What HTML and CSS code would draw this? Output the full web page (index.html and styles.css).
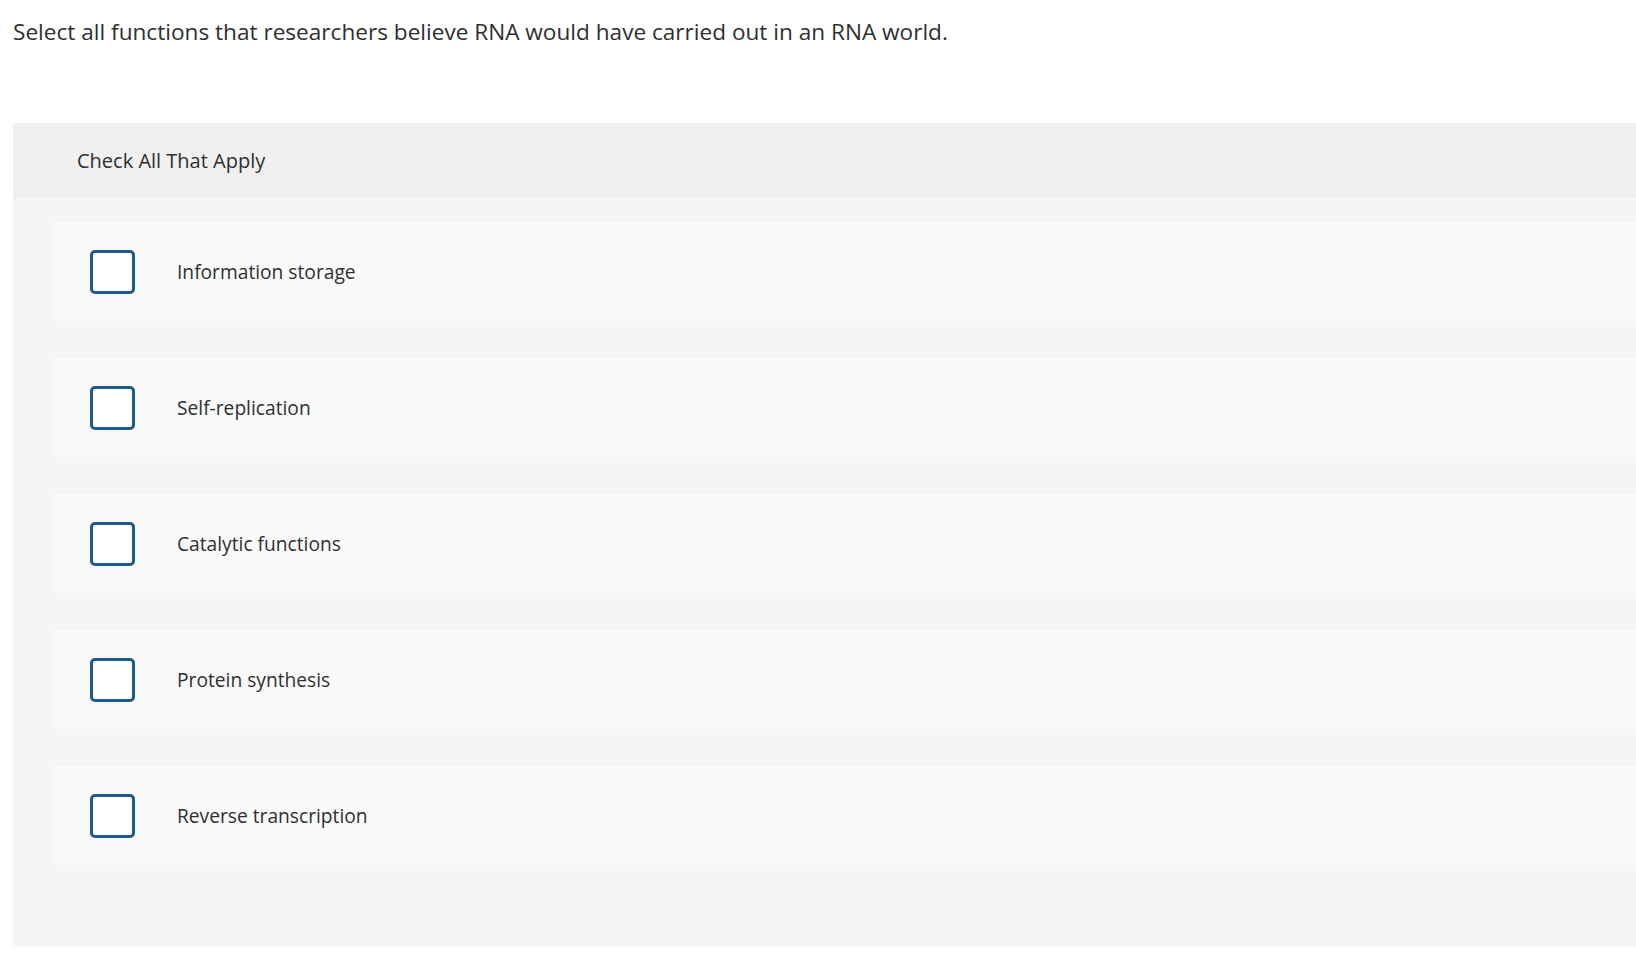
FILE: index.html
```html
<!DOCTYPE html>
<html lang="en">
<head>
<meta charset="utf-8">
<title>Check All That Apply</title>
<link rel="stylesheet" href="styles.css">
</head>
<body>
<main class="page">
  <p class="prompt">Select all functions that researchers believe RNA would have carried out in an RNA world.</p>
  <section class="panel">
    <header class="panel-head">Check All That Apply</header>
    <div class="panel-body">
      <label class="option"><span class="box"></span><span class="label">Information storage</span></label>
      <label class="option"><span class="box"></span><span class="label">Self-replication</span></label>
      <label class="option"><span class="box"></span><span class="label">Catalytic functions</span></label>
      <label class="option"><span class="box"></span><span class="label">Protein synthesis</span></label>
      <label class="option"><span class="box"></span><span class="label">Reverse transcription</span></label>
    </div>
  </section>
</main>
</body>
</html>
```

FILE: styles.css
```css
html, body {
  margin: 0;
  padding: 0;
  background: #ffffff;
  overflow: hidden;
}
body {
  font-family: "Open Sans", "Lato", "Liberation Sans", sans-serif;
  color: #2f2f2f;
}
.page {
  padding: 0 0 0 13px;
}
.prompt {
  margin: 0;
  padding-top: 17px;
  font-size: 22.6px;
  line-height: 30px;
  height: 123px;
  box-sizing: border-box;
}
.panel {
  background: #f5f5f5;
  border-radius: 3px 0 0 3px;
  display: flex;
  flex-direction: column;
}
.panel-head {
  background: #f0f0f0;
  height: 75px;
  display: flex;
  align-items: center;
  padding-left: 64px;
  font-size: 20px;
  border-radius: 3px 0 0 0;
}
.panel-body {
  display: flex;
  flex-direction: column;
  gap: 37px;
  padding: 24px 0 82px 39px;
}
.option {
  background: #fafafa;
  height: 99px;
  display: flex;
  align-items: center;
  padding-left: 38px;
  border-radius: 3px 0 0 3px;
}
.box {
  width: 45px;
  height: 44px;
  box-sizing: border-box;
  border: 3px solid #1d5992;
  border-radius: 5px;
  background: #ffffff;
  flex: none;
}
.label {
  margin-left: 42px;
  font-size: 19.2px;
}
```
